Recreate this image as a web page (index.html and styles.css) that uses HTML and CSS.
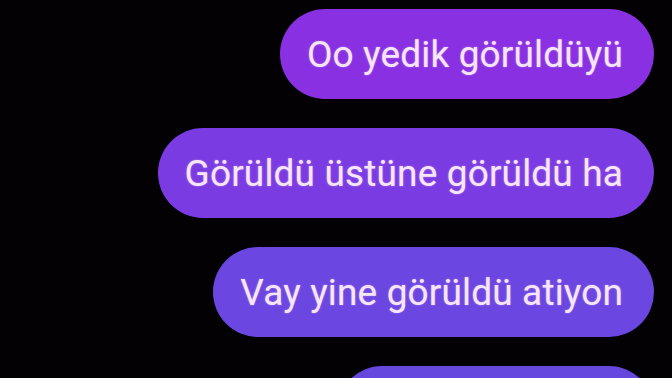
FILE: index.html
```html
<!DOCTYPE html>
<html lang="tr">
<head>
  <meta charset="UTF-8">
  <meta name="viewport" content="width=device-width, initial-scale=1.0">
  <title>Görüldü</title>
  <link rel="stylesheet" href="styles.css">
</head>
<body>
  <div class="chat">
    <div class="bubble first">Oo yedik görüldüyü</div>
    <div class="bubble second">Görüldü üstüne görüldü ha</div>
    <div class="bubble third">Vay yine görüldü atiyon</div>
    <div class="bubble fourth"></div>
  </div>
</body>
</html>
```

FILE: styles.css
```css
* {
  margin: 0;
  padding: 0;
  box-sizing: border-box;
}

body {
  font-family: Roboto, "Liberation Sans", sans-serif;
  background-color: #030104;
  height: 100vh;
  overflow: hidden;
}

.chat {
  display: flex;
  flex-direction: column;
  align-items: flex-end;
  gap: 29px;
  padding: 9px 18px 0 0;
}

.bubble {
  display: flex;
  align-items: center;
  height: 90px;
  padding: 0 31px 0 27px;
  border-radius: 45px;
  color: #f6e6fb;
  font-size: 37px;
  letter-spacing: 0.15px;
  white-space: nowrap;
  text-shadow: 0 0 2px rgba(255, 200, 255, 0.5);
}

.bubble.first {
  background-color: #8830e2;
}

.bubble.second {
  background-color: #7a3ce2;
}

.bubble.third {
  background-color: #6b46e0;
}

.bubble.fourth {
  background-color: #6648de;
  width: 317px;
}
```
